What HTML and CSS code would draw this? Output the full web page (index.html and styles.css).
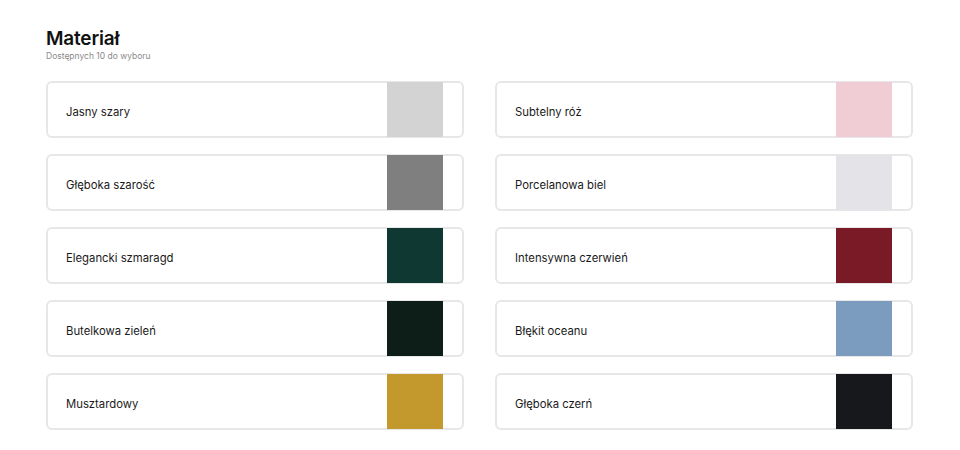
FILE: index.html
```html
<!DOCTYPE html>
<html lang="pl">
<head>
    <meta charset="UTF-8">
    <meta name="viewport" content="width=device-width, initial-scale=1.0">
    <title>Materiał</title>
    <link rel="stylesheet" href="styles.css">
</head>
<body>
    <div class="container">
        <h1>Materiał</h1>
        <p class="subtitle">Dostępnych 10 do wyboru</p>

        <!-- Lista materiałów -->
        <div class="materials">
            <div class="material">
                <span class="name">Jasny szary</span>
                <span class="swatch light-grey"></span>
            </div>
            <div class="material">
                <span class="name">Subtelny róż</span>
                <span class="swatch pink"></span>
            </div>
            <div class="material">
                <span class="name">Głęboka szarość</span>
                <span class="swatch deep-grey"></span>
            </div>
            <div class="material">
                <span class="name">Porcelanowa biel</span>
                <span class="swatch porcelain"></span>
            </div>
            <div class="material">
                <span class="name">Elegancki szmaragd</span>
                <span class="swatch emerald"></span>
            </div>
            <div class="material">
                <span class="name">Intensywna czerwień</span>
                <span class="swatch red"></span>
            </div>
            <div class="material">
                <span class="name">Butelkowa zieleń</span>
                <span class="swatch bottle"></span>
            </div>
            <div class="material">
                <span class="name">Błękit oceanu</span>
                <span class="swatch ocean"></span>
            </div>
            <div class="material">
                <span class="name">Musztardowy</span>
                <span class="swatch mustard"></span>
            </div>
            <div class="material">
                <span class="name">Głęboka czerń</span>
                <span class="swatch black"></span>
            </div>
        </div>
    </div>
</body>
</html>
```

FILE: styles.css
```css
/* Reset */
* {
    margin: 0;
    padding: 0;
    box-sizing: border-box;
}

body {
    font-family: 'Inter', 'Noto Sans', sans-serif;
    background-color: #fff;
    color: #111;
}

.container {
    width: 868px;
    margin: 0 0 0 46px;
    padding-top: 27px;
}

h1 {
    font-size: 19px;
    font-weight: 600;
    line-height: 24px;
    color: #111;
    letter-spacing: -0.2px;
}

.subtitle {
    font-size: 8.5px;
    color: #8a8a8a;
    line-height: 10px;
}

/* Siatka materiałów */
.materials {
    display: grid;
    grid-template-columns: 418px 418px;
    column-gap: 31px;
    row-gap: 16px;
    margin-top: 20px;
}

.material {
    height: 57px;
    border: 2px solid #e7e7e7;
    border-radius: 6px;
    display: flex;
    align-items: center;
    justify-content: space-between;
    padding: 0 19px 0 18px;
}

.name {
    font-size: 11.3px;
    color: #1a1a1a;
    padding-top: 4px;
}

.swatch {
    width: 56px;
    height: 55px;
    margin: -1px 0;
}

.light-grey { background-color: #d3d3d3; }
.deep-grey { background-color: #7f7f7f; }
.emerald { background-color: #0f3833; }
.bottle { background-color: #0d1e19; }
.mustard { background-color: #c3982d; }
.pink { background-color: #f0cdd4; }
.porcelain { background-color: #e4e4e8; }
.red { background-color: #7b1a27; }
.ocean { background-color: #7b9cbe; }
.black { background-color: #16181b; }
```
